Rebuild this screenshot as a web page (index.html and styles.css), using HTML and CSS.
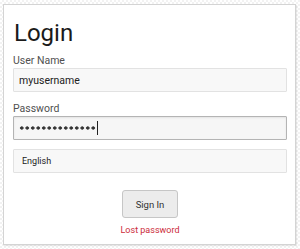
FILE: index.html
```html
<!DOCTYPE html>
<html lang="en">
<head>
    <meta charset="UTF-8">
    <meta name="viewport" content="width=device-width, initial-scale=1.0">
    <title>Login</title>
    <link rel="stylesheet" href="styles.css">
</head>
<body>
    <div class="card">
        <h1>Login</h1>

        <label class="label" for="username">User Name</label>
        <input id="username" class="field" type="text" value="myusername">

        <label class="label">Password</label>
        <div class="field field-focus">
            <span class="dots" aria-label="password"></span><span class="caret"></span>
        </div>

        <div class="field field-select">English</div>

        <div class="actions">
            <button class="btn" type="button">Sign In</button>
            <a href="#" class="lost">Lost password</a>
        </div>
    </div>
</body>
</html>
```

FILE: styles.css
```css
* {
    box-sizing: border-box;
    margin: 0;
    padding: 0;
}
body {
    font-family: Roboto, 'Liberation Sans', sans-serif;
    color: #333;
    background-color: #fff;
    background-image:
        linear-gradient(45deg, #f2f2f2 25%, transparent 25%, transparent 75%, #f2f2f2 75%),
        linear-gradient(45deg, #f2f2f2 25%, transparent 25%, transparent 75%, #f2f2f2 75%);
    background-size: 4px 4px;
    background-position: 0 0, 2px 2px;
    padding: 4px 4px 0 3px;
    height: 249px;
    overflow: hidden;
}
.card {
    background-color: #fff;
    border: 1px solid #d4d4d4;
    box-shadow: 1px 1px 1px rgba(0, 0, 0, 0.08);
    width: 293px;
    height: 241px;
    padding: 13px 8px 0 9px;
    display: flex;
    flex-direction: column;
}
h1 {
    font-size: 24px;
    font-weight: 400;
    line-height: 30px;
    color: #1a1a1a;
    margin-bottom: 5px;
    padding-left: 1px;
}
.label {
    display: block;
    font-size: 10.5px;
    line-height: 15px;
    color: #505050;
}
.field {
    display: flex;
    align-items: center;
    width: 100%;
    height: 24px;
    margin-bottom: 9px;
    padding: 0 5px;
    font-family: inherit;
    font-size: 10.5px;
    color: #222;
    background-color: #f8f8f8;
    border: 1px solid #e2e2e2;
    border-radius: 1px;
    outline: none;
}
.field-focus {
    background-color: #f6f6f6;
    border-color: #b4b4b4;
    box-shadow: inset 0 1px 2px rgba(0, 0, 0, 0.08);
}
.dots {
    width: 77px;
    height: 6px;
    background-image: radial-gradient(circle, #333 1.4px, transparent 1.9px);
    background-size: 5.5px 6px;
}
.caret {
    width: 1px;
    height: 14px;
    margin-left: 1px;
    background-color: #222;
}
.field-select {
    padding-left: 8px;
    font-size: 9px;
}
.actions {
    display: flex;
    flex-direction: column;
    align-items: center;
    margin-top: 8px;
}
.btn {
    width: 56px;
    height: 28px;
    font-family: inherit;
    font-size: 9.5px;
    color: #333;
    background-color: #ececec;
    border: 1px solid #c6c6c6;
    border-radius: 3px;
}
.lost {
    margin-top: 6px;
    font-size: 9px;
    line-height: 13px;
    color: #cc2a3a;
    text-decoration: none;
}
```
